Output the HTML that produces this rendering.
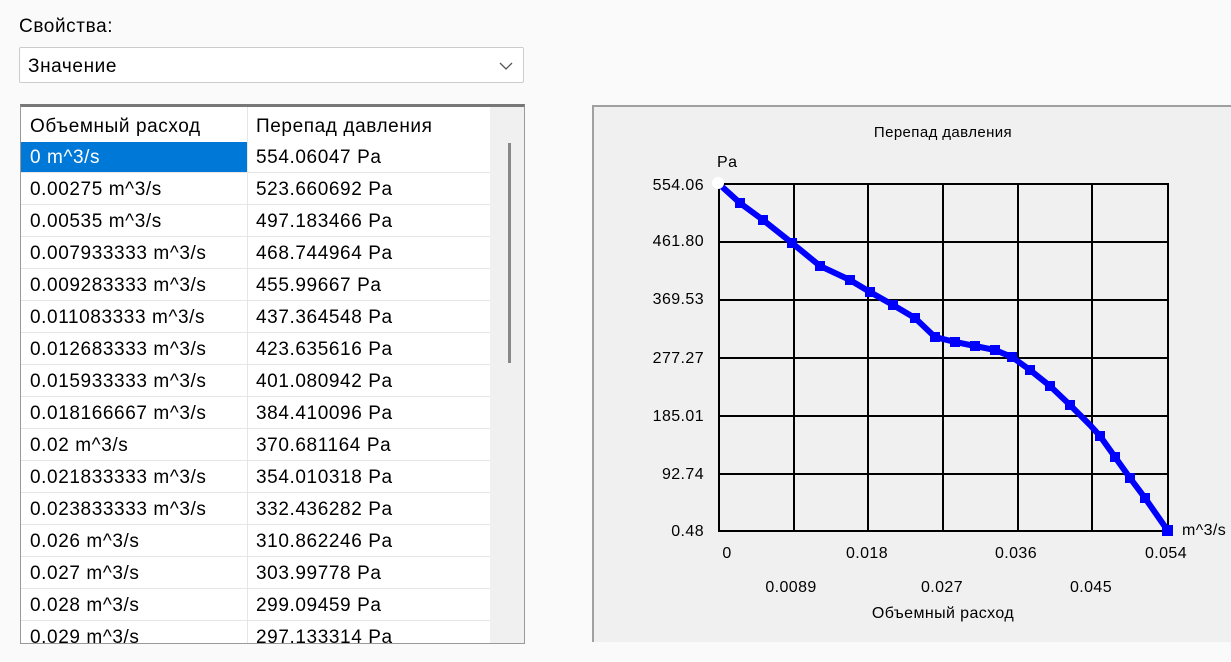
<!DOCTYPE html>
<html><head><meta charset="utf-8"><style>
body{margin:0;width:1231px;height:662px;background:#fafafa;font-family:"Liberation Sans",sans-serif;position:relative;overflow:hidden;color:#000}
.abs{position:absolute}
.t{font-size:19px;letter-spacing:0.6px}
.c{position:absolute;top:0;height:31px;line-height:31px;font-size:19px;letter-spacing:0.6px;border-bottom:1px solid #e6e6e6;padding-left:9px;box-sizing:border-box;white-space:nowrap}
</style></head><body>
<div class="abs t" style="left:19px;top:16px">Свойства:</div>
<div class="abs" style="left:19px;top:47px;width:505px;height:36px;background:#fff;border:1px solid #ccc;border-radius:2px;box-sizing:border-box">
<div class="abs t" style="left:8px;top:8px">Значение</div>
<svg class="abs" style="left:478px;top:12px" width="16" height="12"><path d="M2 3 L8 9 L14 3" fill="none" stroke="#555" stroke-width="1.3"/></svg>
</div>
<div class="abs" style="left:20px;top:104px;width:505px;height:540px;background:#fff;border:1px solid #999;border-top:3px solid #777;box-sizing:border-box;overflow:hidden">
<div class="abs" style="left:469px;top:0;width:36px;height:540px;background:#f0f0f0"></div>
<div class="abs" style="left:487px;top:36px;width:3px;height:220px;background:#888"></div>
<div class="abs" style="left:226px;top:0;width:1px;height:540px;background:#e6e6e6"></div>
<div class="c" style="left:0;top:4px;width:226px;border:none">Объемный расход</div>
<div class="c" style="left:226px;top:4px;width:243px;border:none">Перепад давления</div>
<div id="rows"></div>
</div>
<script>
var d=[["0 m^3/s","554.06047 Pa"],["0.00275 m^3/s","523.660692 Pa"],["0.00535 m^3/s","497.183466 Pa"],["0.007933333 m^3/s","468.744964 Pa"],["0.009283333 m^3/s","455.99667 Pa"],["0.011083333 m^3/s","437.364548 Pa"],["0.012683333 m^3/s","423.635616 Pa"],["0.015933333 m^3/s","401.080942 Pa"],["0.018166667 m^3/s","384.410096 Pa"],["0.02 m^3/s","370.681164 Pa"],["0.021833333 m^3/s","354.010318 Pa"],["0.023833333 m^3/s","332.436282 Pa"],["0.026 m^3/s","310.862246 Pa"],["0.027 m^3/s","303.99778 Pa"],["0.028 m^3/s","299.09459 Pa"],["0.029 m^3/s","297.133314 Pa"]];
var h="";d.forEach(function(r,i){var y=35+i*32;var sel=i==0?"background:#0078d7;color:#fff;":"";h+='<div class="c" style="left:0;top:'+y+'px;width:226px;'+sel+'">'+r[0]+'</div><div class="c" style="left:226px;top:'+y+'px;width:243px">'+r[1]+'</div>';});
document.getElementById("rows").innerHTML=h;
</script>
<div class="abs" style="left:592px;top:105px;width:640px;height:537px;background:#f0f0f0;border-left:2px solid #a0a0a0;border-top:2px solid #a0a0a0;box-sizing:border-box"></div>
<svg class="abs" style="left:0;top:0" width="1231" height="662" font-family="Liberation Sans" font-size="16" letter-spacing="0.4">
<g stroke="#000" stroke-width="2" fill="none">
<rect x="719" y="184" width="449" height="347"/>
<path d="M794 184V531M868 184V531M943 184V531M1018 184V531M1092 184V531M719 242H1168M719 300H1168M719 358H1168M719 416H1168M719 474H1168"/>
</g>
<polyline fill="none" stroke="#0000ff" stroke-width="6" points="719,184 740,203 763,220 792,243 820,266 850,280 870,292 893,305 915,318 935,337 955,342 975,346 995,350 1012,357 1030,370 1050,386 1070,405 1090,425 1100,436 1115,457 1130,478 1145,498 1168,531"/>
<g fill="#0000ff">
<rect x="735" y="198" width="10" height="10"/><rect x="758" y="215" width="10" height="10"/><rect x="787" y="238" width="10" height="10"/><rect x="815" y="261" width="10" height="10"/><rect x="845" y="275" width="10" height="10"/><rect x="865" y="287" width="10" height="10"/><rect x="888" y="300" width="10" height="10"/><rect x="910" y="313" width="10" height="10"/><rect x="930" y="332" width="10" height="10"/><rect x="950" y="337" width="10" height="10"/><rect x="970" y="341" width="10" height="10"/><rect x="990" y="345" width="10" height="10"/><rect x="1007" y="352" width="10" height="10"/><rect x="1025" y="365" width="10" height="10"/><rect x="1045" y="381" width="10" height="10"/><rect x="1065" y="400" width="10" height="10"/><rect x="1095" y="431" width="10" height="10"/><rect x="1110" y="452" width="10" height="10"/><rect x="1125" y="473" width="10" height="10"/><rect x="1140" y="493" width="10" height="10"/><rect x="1162" y="525" width="11" height="11"/>
</g>
<circle cx="718" cy="183" r="6" fill="#fff"/>
<text x="943" y="137" text-anchor="middle" font-size="15">Перепад давления</text>
<text x="717" y="167">Pa</text>
<g text-anchor="end"><text x="704" y="190">554.06</text><text x="704" y="246">461.80</text><text x="704" y="304">369.53</text><text x="704" y="363">277.27</text><text x="704" y="421">185.01</text><text x="704" y="479">92.74</text><text x="704" y="536">0.48</text></g>
<text x="1182" y="535">m^3/s</text>
<g text-anchor="middle"><text x="727" y="558">0</text><text x="867" y="558">0.018</text><text x="1016" y="558">0.036</text><text x="1166" y="558">0.054</text><text x="791" y="592">0.0089</text><text x="942" y="592">0.027</text><text x="1091" y="592">0.045</text><text x="943" y="618">Объемный расход</text></g>
</svg>
</body></html>
